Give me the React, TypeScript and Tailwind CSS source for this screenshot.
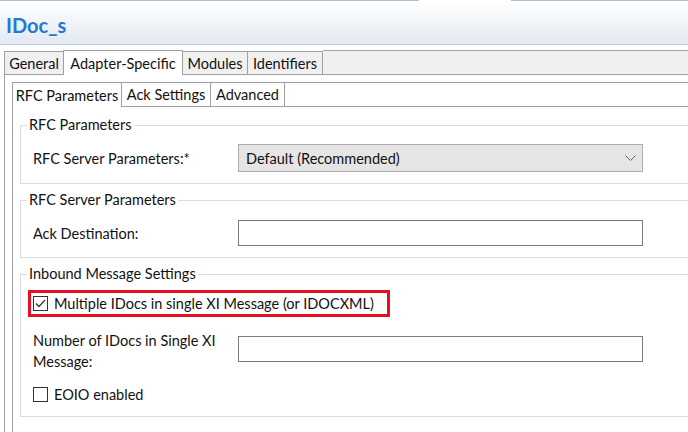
import React from "react";

const font = "font-['Lato','Noto_Sans',sans-serif]";

function CheckBox({ checked }: { checked?: boolean }) {
  return (
    <span className="flex h-[15px] w-[15px] shrink-0 items-center justify-center border border-[#333333] bg-white">
      {checked && (
        <svg width="13" height="13" viewBox="0 0 13 13">
          <polyline points="2,6.5 5,9.5 11,3" fill="none" stroke="#3c3c3c" strokeWidth="1.3" />
        </svg>
      )}
    </span>
  );
}

function Group({ title, children, className = "" }: { title: string; children: React.ReactNode; className?: string }) {
  return (
    <fieldset className={`m-0 w-[720px] border border-[#dcdcdc] pl-[6px] ${className}`}>
      <legend className="px-[2px] leading-[20px]">{title}</legend>
      <div className="pl-[6px]">{children}</div>
    </fieldset>
  );
}

export default function App() {
  return (
    <div className={`h-[432px] w-[688px] overflow-hidden whitespace-nowrap bg-white text-[14.5px] text-[#111111] ${font}`}>
      {/* editor header */}
      <div className="flex h-px">
        <div className="w-[419px] bg-[#b5bccb]" />
        <div className="w-[92px] bg-white" />
        <div className="flex-1 bg-[#b5bccb]" />
      </div>
      <div className="flex h-[44px] items-center border-b border-[#b9cfe2] bg-gradient-to-b from-white to-[#e3e9f2] pl-[6px] pt-[4px]">
        <span className="text-[20px] font-bold leading-none text-[#2479d3]">IDoc_s</span>
      </div>

      {/* outer tab folder */}
      <div className="ml-[4px] mt-[5px]">
        <div className="flex h-[25px]">
          <div className="mt-px flex w-[59px] items-center justify-center border-y border-l border-[#a0a0a0] bg-[#f0f0f0] pt-px">General</div>
          <div className="flex w-[120px] items-center justify-center border-x border-t border-[#a0a0a0] bg-white pt-px">Adapter-Specific</div>
          <div className="mt-px flex w-[65px] items-center justify-center border-y border-r border-[#a0a0a0] bg-[#f0f0f0] pt-px">Modules</div>
          <div className="mt-px flex w-[75px] items-center justify-center border-y border-r border-[#a0a0a0] bg-[#f0f0f0] pt-px">Identifiers</div>
          <div className="flex-1 border-y border-[#a0a0a0] bg-[#f0f0f0]" />
        </div>

        <div className="border-l border-[#a0a0a0] pl-[7px] pt-[7px]">
          {/* inner tab folder */}
          <div className="flex h-[25px]">
            <div className="flex w-[110px] items-center justify-center border-x border-t border-[#a0a0a0] bg-white pt-px">RFC Parameters</div>
            <div className="flex w-[89px] items-center justify-center border-y border-r border-[#a0a0a0] bg-white pt-px">Ack Settings</div>
            <div className="flex w-[74px] items-center justify-center border-y border-r border-[#a0a0a0] bg-white pt-px">Advanced</div>
            <div className="flex-1 border-y border-[#a0a0a0]" />
          </div>

          <div className="h-[400px] border-l border-[#a0a0a0] pl-[7px] pt-[8px]">
            <Group title="RFC Parameters">
              <div className="mt-[9px] flex items-center pb-[11px]">
                <div className="w-[205px] pt-[2px]">RFC Server Parameters:*</div>
                <div className="flex h-[28px] w-[405px] items-center justify-between border border-[#adadad] bg-[#e5e5e5] pl-[7px] pr-[6px]">
                  <span className="pt-[2px]">Default (Recommended)</span>
                  <svg width="11" height="7" viewBox="0 0 11 7">
                    <polyline points="0.5,0.5 5.5,5.5 10.5,0.5" fill="none" stroke="#606060" strokeWidth="1" />
                  </svg>
                </div>
              </div>
            </Group>

            <Group title="RFC Server Parameters" className="mt-[6px]">
              <div className="mt-[10px] flex items-center pb-[11px]">
                <div className="w-[205px] pt-[2px]">Ack Destination:</div>
                <div className="h-[26px] w-[405px] border border-[#7a7a7a] bg-white" />
              </div>
            </Group>

            <Group title="Inbound Message Settings" className="mt-[6px]">
              <div className="mt-[6px] -ml-[5px] flex h-[27px] w-[362px] items-center gap-[6px] border-[3px] border-[#e81123] pl-[2px]">
                <CheckBox checked />
                <span className="pt-px">Multiple IDocs in single XI Message (or IDOCXML)</span>
              </div>
              <div className="mt-[13px] flex items-start">
                <div className="w-[205px] leading-[21px]">
                  Number of IDocs in Single XI
                  <br />
                  Message:
                </div>
                <div className="mt-[6px] h-[26px] w-[405px] border border-[#7a7a7a] bg-white" />
              </div>
              <div className="mt-[11px] flex items-center gap-[6px] pb-[11px] leading-[21px]">
                <CheckBox />
                <span className="pt-px">EOIO enabled</span>
              </div>
            </Group>
          </div>
        </div>
      </div>
    </div>
  );
}
